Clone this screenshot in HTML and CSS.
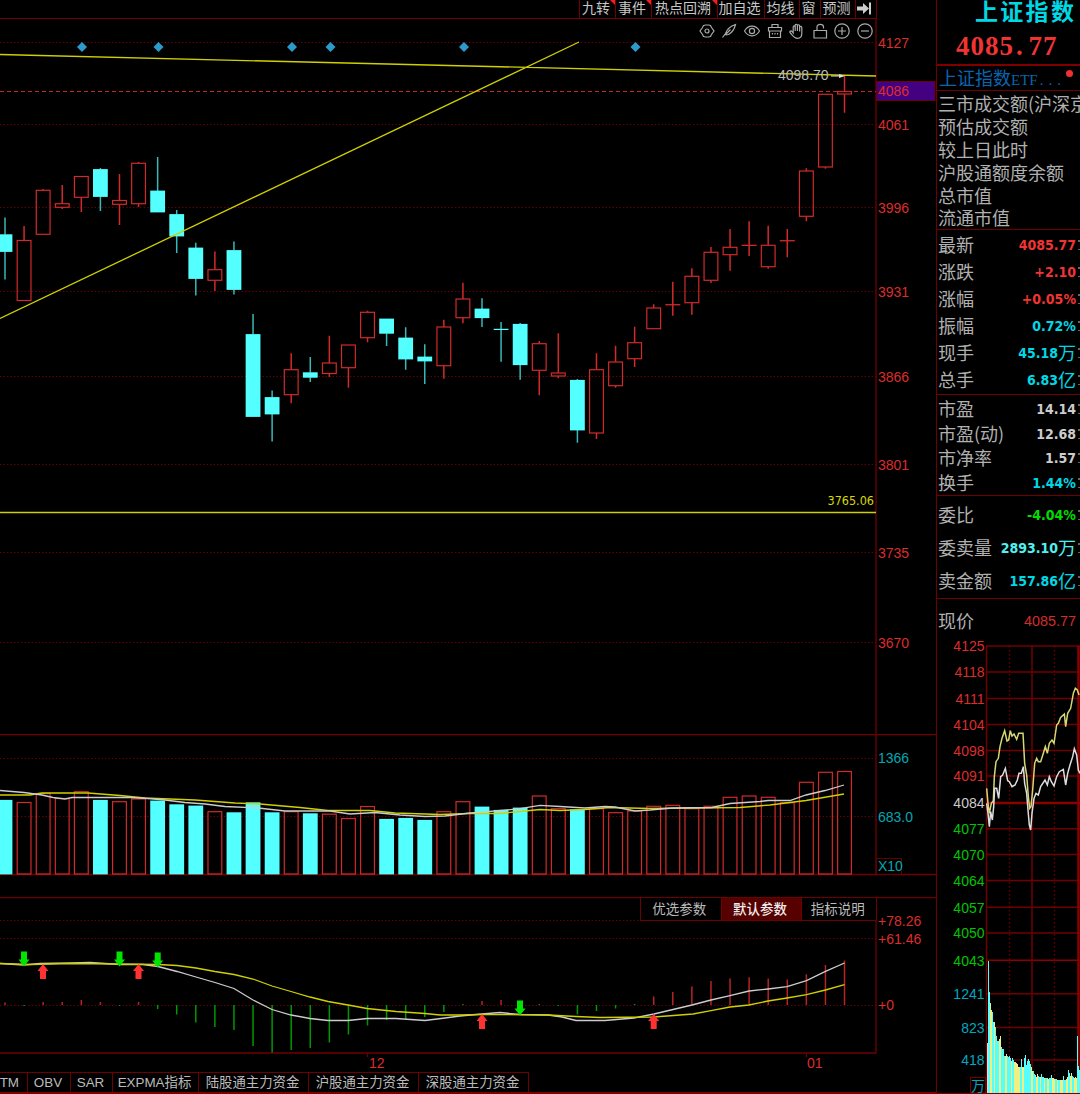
FILE: index.html
```html
<!DOCTYPE html>
<html lang="zh-CN">
<head>
  <meta charset="UTF-8">
  <meta name="viewport" content="width=device-width, initial-scale=1.0">
  <title>上证指数</title>
  <link rel="stylesheet" href="styles.css">
</head>
<body>
  <div class="app">
    <main class="charts">
      <nav class="toolbar">
        <span class="tool w-36 hot">九转</span>
        <span class="tool w-36 hot">事件</span>
        <span class="tool w-66 hot">热点回溯</span>
        <span class="tool w-47">加自选</span>
        <span class="tool w-35">均线</span>
        <span class="tool w-21">窗</span>
        <span class="tool w-35">预测</span>
        <span class="tool w-21"><svg width="15" height="13" viewBox="0 0 15 13"><path d="M0 4.500h6V1l6 5.500L6 12V8.500H0z" fill="#ccc"/><path d="M13 0.500v12" stroke="#ccc" stroke-width="2"/></svg></span>
      </nav>

      <section class="kline">
        <div class="draw-tools">
          <svg viewBox="0 0 16 16"><path d="M4.500 2.500L6.500 2h3l2 .5 1 2L15 8l-2.500 3.500-1 2-2 .5h-3l-2-.5-1-2L1 8l2.500-3.500z"/><circle cx="8" cy="8" r="2"/></svg>
          <svg viewBox="0 0 16 16"><path d="M1.500 14.500L4.500 10.500C6 6 10 3 14.500 1.500 13.500 5.500 11.500 9.500 7.500 11.500L4.500 12M4.500 11.500L9.500 6.500"/></svg>
          <svg viewBox="0 0 16 16"><path d="M0.500 8C4 1.500 12 1.500 15.500 8 12 14.500 4 14.500 0.500 8z"/><circle cx="8" cy="8" r="2.600"/></svg>
          <svg viewBox="0 0 16 16"><path d="M1.500 4.500h13v3.500H1.500zM2.500 8V14.500h11V8M5 4.500V1.500h6v3M5.500 10v1.500M8 10v1.500M10.500 10v1.500"/></svg>
          <svg viewBox="0 0 16 16"><path d="M4.200 10V4c0-1.400 2-1.400 2 0v4V2.300c0-1.400 2.200-1.400 2.200 0V8 2.800c0-1.400 2.200-1.400 2.200 0V8.500 4.500c0-1.400 2.200-1.400 2.200 0v6c0 3-1.800 4.800-4.500 4.800-3.200 0-4.300-2.300-7.300-5.800-.5-1.400 1-2 2-1z"/></svg>
          <svg viewBox="0 0 16 16"><path d="M2 7.500h12.500V15H2zM5 7.500V4c0-3.500 6.500-3.500 6.500 0v1.500"/></svg>
          <svg viewBox="0 0 16 16"><circle cx="8" cy="8" r="7.200"/><path d="M4 8h8M8 4v8"/></svg>
          <svg viewBox="0 0 16 16"><circle cx="8" cy="8" r="7.200"/><path d="M4 8h8"/></svg>
        </div>
        <svg class="panel" width="936" height="715" viewBox="0 19 936 715">
          <path class="grid" d="M0 42.500H876M0 124.500H876M0 207.500H876M0 291.500H876M0 376.500H876M0 464.500H876M0 552.500H876M0 642.500H876"/>
          <path class="frame" d="M876 19V734"/>
          <g id="diamonds"></g>
          <g id="candles"></g>
          <path class="latest" d="M0 91.500H876"/>
          <path class="ma-y" d="M0 54.500L876 76M0 318.500L579 42M0 512.500H876"/>
          <path d="M831 76h8" stroke="#ddd"/><path d="M839 74l6 2-6 2z" fill="#ddd"/>
          <text x="778" y="80" fill="#bbb">4098.70</text>
          <text x="827.500" y="505" class="small" fill="#d8d800">3765.06</text>
          <rect x="876.500" y="81.500" width="58.500" height="19" fill="#430080" stroke="#700000"/>
          <g class="red">
            <text x="878" y="47.500">4127</text><text x="878" y="95.500">4086</text>
            <text x="878" y="129.500">4061</text><text x="878" y="212.500">3996</text>
            <text x="878" y="296.500">3931</text><text x="878" y="381.500">3866</text>
            <text x="878" y="469.500">3801</text><text x="878" y="557.500">3735</text>
            <text x="878" y="647.500">3670</text>
          </g>
        </svg>
      </section>

      <section class="volume">
        <svg class="panel" width="936" height="163" viewBox="0 734 936 163">
          <path class="grid" d="M0 758.500H876M0 816.500H876"/>
          <path class="frame" d="M0 734.500H936M876 734V874.500M0 874.500H936"/>
          <g id="volumes"></g>
          <polyline class="ma-y" points="0,795 30,795 42,793 88,793 120,795.500 145,798 195,800 235,803 260,804 300,807.500 328,810.500 370,810.500 395,813 440,814.500 470,813.500 500,813.500 520,811.500 540,809.500 560,810.500 585,809.500 610,807.500 650,808.500 740,807.500 770,805 806,800.500 844,794"/>
          <polyline class="ma-w" points="0,790.500 24,792.500 42,795 53,797.500 65,799 72,797.500 130,797.500 148,798.500 165,800 185,802.500 205,804 225,806.500 258,808 285,811 330,811 350,814 375,812.500 400,815 425,816.500 445,816 470,813 482,812.200 500,810.500 520,808.700 540,805.300 560,806.500 585,808 605,806.500 615,807 635,811 650,810 672,808 712,807.500 730,803.500 760,801.500 768,800.500 790,800.500 806,795 825,790.500 844,785"/>
          <rect x="876.500" y="858.500" width="25" height="16" fill="none" stroke="#600000"/>
          <g class="teal">
            <text x="878" y="763">1366</text><text x="878" y="821.500">683.0</text><text x="878" y="871">X10</text>
          </g>
        </svg>
      </section>

      <section class="macd">
        <div class="param-tabs"><span>优选参数</span><span class="active">默认参数</span><span class="last-tab">指标说明</span></div>
        <svg class="panel" width="936" height="175" viewBox="0 897 936 175">
          <path class="grid" d="M0 920.500H876M0 938.500H876M0 1005.500H876"/>
          <path class="frame" d="M0 897.500H936M876 897V1053.500M0 1053H876M367.500 1053v4M806.500 1053v4"/>
          <g id="macd"></g>
          <polyline class="ma-w" points="0,963.500 24,965 40,963.500 72,963 90,962.500 120,964.500 143,964.500 158,966.500 177,971.500 196,977 215,982.500 234,988.500 253,1000 272,1009.500 291,1015 310,1018.500 328,1020.500 348,1020.500 367,1018.500 396,1018.500 425,1020.500 445,1018 460,1016 482,1014 500,1012.500 520,1014.500 548,1015 562,1017 576,1020.500 605,1020.500 634,1018 654,1014 692,1005 711,1000 730,995.700 749,991 768,989 787,986.700 806.500,980.700 825.500,971.300 844.500,963"/>
          <polyline class="ma-y" points="0,963.500 30,964.500 72,963.500 158,964.500 177,965.500 196,968 215,971.500 234,974.500 253,979 272,986 291,991.500 310,997 328,1001.500 348,1005 367,1008.500 396,1011.500 425,1013.500 440,1015 460,1015 482,1014.500 548,1015 576,1016.500 600,1017.500 654,1017 693,1014 711,1010.700 730,1007 749,1005 768,1001 787,998 806.500,994.700 825.500,990 844.500,984.700"/>
          <g id="signals"></g>
          <g class="red">
            <text x="878" y="926">+78.26</text><text x="878" y="944">+61.46</text><text x="878" y="1010">+0</text>
            <text x="369" y="1067.500">12</text><text x="807" y="1067.500">01</text>
          </g>
        </svg>
      </section>

      <nav class="indicators">
        <span class="w-28 cut">MTM</span><span class="w-43">OBV</span><span class="w-42">SAR</span><span class="w-86">EXPMA指标</span><span class="w-110">陆股通主力资金</span><span class="w-110">沪股通主力资金</span><span class="w-110">深股通主力资金</span>
      </nav>
    </main>

    <aside class="quote">
      <header>
        <h1>上证指数</h1>
        <div class="price">4085<i>.</i>77</div>
      </header>
      <div class="etf">上证指数<span>ETF</span><i>...</i><b></b></div>
      <ul class="totals">
        <li>三市成交额(沪深京</li>
        <li>预估成交额</li>
        <li>较上日此时</li>
        <li>沪股通额度余额</li>
        <li>总市值</li>
        <li>流通市值</li>
      </ul>
      <dl class="rows basic">
        <div><dt>最新</dt><dd class="up">4085.77</dd></div>
        <div><dt>涨跌</dt><dd class="up">+2.10</dd></div>
        <div><dt>涨幅</dt><dd class="up">+0.05%</dd></div>
        <div><dt>振幅</dt><dd class="cyan">0.72%</dd></div>
        <div><dt>现手</dt><dd class="cyan">45.18<em>万</em></dd></div>
        <div><dt>总手</dt><dd class="cyan">6.83<em>亿</em></dd></div>
      </dl>
      <dl class="rows ratio">
        <div><dt>市盈</dt><dd>14.14</dd></div>
        <div><dt>市盈(动)</dt><dd>12.68</dd></div>
        <div><dt>市净率</dt><dd>1.57</dd></div>
        <div><dt>换手</dt><dd class="cyan">1.44%</dd></div>
      </dl>
      <dl class="rows order">
        <div><dt>委比</dt><dd class="down">-4.04%</dd></div>
        <div><dt>委卖量</dt><dd class="light">2893.10<em>万</em></dd></div>
        <div><dt>卖金额</dt><dd class="cyan">157.86<em>亿</em></dd></div>
      </dl>
      <dl class="rows now">
        <div><dt>现价</dt><dd>4085.77</dd></div>
      </dl>
      <svg class="panel intraday" width="143" height="454" viewBox="937 640 143 454">
        <path class="grid2" d="M1009.500 646V1093M1054.500 646V1093"/>
        <g id="intraday-grid"></g>
        <path class="frame2" d="M986.500 646V1093M1032 646V1093"/>
        <path class="thick" d="M1078.500 646V1093M986 803H1080"/>
        <g id="intraday-vol"></g>
        <polyline id="avg" fill="none" stroke="#d6d673" stroke-width="1.500"/>
        <polyline id="tick" fill="none" stroke="#ddd" stroke-width="1.500"/>
        <rect x="970.500" y="1077.500" width="15" height="15.500" fill="none" stroke="#700000"/>
        <g id="intraday-labels" text-anchor="end"></g>
        <path d="M937 1093.500H1080" stroke="#800000"/>
      </svg>
    </aside>
  </div>
  <script src="charts.js"></script>
</body>
</html>
```
FILE: styles.css
```css
* { box-sizing: border-box; }
body { margin: 0; background: #000; color: #bbb; font-family: "Liberation Sans", "Noto Sans CJK SC", sans-serif; overflow: hidden; }
.app { display: grid; grid-template-columns: 936px 144px; width: 1080px; height: 1094px; overflow: hidden; }
.charts { display: flex; flex-direction: column; min-width: 0; }

.w-21 { width: 21px; }
.w-28 { width: 28px; }
.w-35 { width: 35px; }
.w-36 { width: 36px; }
.w-42 { width: 42px; }
.w-43 { width: 43px; }
.w-47 { width: 47px; }
.w-66 { width: 66px; }
.w-86 { width: 86px; }
.w-110 { width: 110px; }

/* top toolbar */
.toolbar { display: flex; justify-content: flex-end; width: 877px; height: 19px; border-bottom: 1px solid #700000; border-right: 1px solid #700000; }
.tool { position: relative; display: flex; flex: none; align-items: center; justify-content: center; height: 18px; padding: 0 3px 2px 0; border-left: 1px solid #700000; color: #c8c8c8; font-size: 14px; line-height: 16px; white-space: nowrap; }
.hot::after { content: ""; position: absolute; top: 0; right: 0; border-top: 5px solid #f02020; border-left: 5px solid transparent; }

/* chart panels */
.panel { display: block; font: 14px "Liberation Sans", sans-serif; }
.small { font: 12.5px "DejaVu Sans Condensed", "DejaVu Sans", sans-serif; font-stretch: condensed; }
.red { fill: #dc2c2c; }
.teal { fill: #00a8b0; }
.grid { fill: none; stroke: #640000; stroke-dasharray: 1.5 2; }
.frame { fill: none; stroke: #700000; stroke-width: 1.3; }
.latest { stroke: #c42828; stroke-dasharray: 4 3; stroke-width: 1.2; }
.ma-y { fill: none; stroke: #d0d000; stroke-width: 1.3; }
.ma-w { fill: none; stroke: #ccc; stroke-width: 1.3; }
.kline, .macd { position: relative; }
.draw-tools { position: absolute; top: 4px; right: 63px; display: flex; gap: 6.6px; }
.draw-tools svg { width: 16px; height: 16px; fill: none; stroke: #aaa; stroke-width: 1.2; }

.param-tabs { position: absolute; top: 0; left: 640px; display: flex; width: 237px; height: 24px; border: 1px solid #700000; background: #000; font-size: 13.5px; line-height: 23px; text-align: center; }
.param-tabs span { width: 81px; padding-right: 3px; border-right: 1px solid #700000; }
.param-tabs .active { background: #560000; color: #eee; font-weight: 500; }
.param-tabs .last-tab { width: 74px; border-right: 0; }

.indicators { display: flex; height: 22px; border-bottom: 2px solid #800000; font-size: 13.4px; line-height: 20px; text-align: center; }
.indicators span { flex: none; padding-right: 2px; border-top: 1px solid #700000; border-right: 1px solid #700000; white-space: nowrap; }
.indicators .cut { display: flex; justify-content: flex-end; padding-right: 8px; overflow: hidden; }

/* quote sidebar */
.quote { display: flex; flex-direction: column; min-width: 0; border-left: 1px solid #700000; font-family: "Noto Sans CJK SC", sans-serif; overflow: hidden; }
header { height: 66px; border-bottom: 2px solid #800000; }
h1 { margin: 0 0 0 38px; color: #00d8e4; font-size: 23px; font-weight: 700; line-height: 20px; letter-spacing: 2.3px; white-space: nowrap; }
.price { margin: 10px 0 0 19px; color: #f03434; font: bold 27px/32px "Liberation Serif", serif; letter-spacing: 1px; }
.price i { display: inline-block; width: 14.5px; padding-left: 2px; font-style: normal; }
.etf { position: relative; height: 25px; padding-left: 2px; border-bottom: 1px solid #700000; color: #0866b0; font-size: 18px; line-height: 22px; white-space: nowrap; }
.etf span { font: 15px/22px "Liberation Serif", serif; }
.etf i { margin-left: 2px; font: 15px/22px "Liberation Serif", serif; letter-spacing: 5px; }
.etf b { position: absolute; top: 4px; right: 7px; width: 7px; height: 7px; border-radius: 50%; background: #f23030; }
ul, dl { margin: 0; padding: 0; list-style: none; border-bottom: 1px solid #700000; font-size: 18px; color: #b0b0b0; }
.totals { height: 139px; padding: 1px 0 0 1px; }
.totals li { height: 22.9px; line-height: 22px; white-space: nowrap; }
.rows { display: flex; flex-direction: column; padding: 0 4px 0 1px; }
.rows div { display: flex; align-items: center; justify-content: space-between; position: relative; flex: 1; line-height: 22px; white-space: nowrap; }
.rows div::after { content: ""; position: absolute; right: -4px; width: 2px; height: 7px; border-top: 2px solid #666; border-bottom: 1px solid #666; }
.rows dt { margin-top: -2px; }
.rows dd { display: flex; align-items: center; margin: 0; color: #ccc; font-family: "DejaVu Sans Condensed", "DejaVu Sans", sans-serif; font-size: 14px; font-stretch: condensed; font-weight: 700; }
.rows em { margin-top: -2px; font: 18px/22px "Noto Sans CJK SC", sans-serif; }
.basic { height: 165px; padding-top: 1px; }
.ratio { height: 101px; padding-top: 2px; }
.order { height: 103px; padding-top: 2px; }
.rows.now { height: 41px; padding-top: 2px; border: 0; }
.now div::after { display: none; }
.rows .up { color: #f03434; }
.rows .down { color: #00dc00; }
.rows .cyan { color: #00d8e4; }
.rows .light { color: #50f0f0; }
.rows.now dd { color: #d42c2c; font: 14.4px "Liberation Sans", sans-serif; }
.intraday { flex: none; }
.grid2 { stroke: #780000; stroke-dasharray: 1.5 2.5; stroke-width: 1.2; }
.frame2 { fill: none; stroke: #700000; stroke-width: 1.5; }
.thick { fill: none; stroke: #8c0000; stroke-width: 2.5; }
```
FILE: charts.js
```javascript
const NS = 'http://www.w3.org/2000/svg';
const UP = '#d02a2a';
const DOWN = '#54ffff';
const STEP = 19.08;

function add(id, tag, attrs, text) {
  const el = document.createElementNS(NS, tag);
  for (const k in attrs) el.setAttribute(k, attrs[k]);
  if (text) el.textContent = text;
  document.getElementById(id).appendChild(el);
}
const xAt = i => 5 + i * STEP;

// [high, body top, body bottom, low, down day]
const candles = [
  [217.5, 234.7, 251.5, 279.5, 1], [226, 240.5, 300.5, 300.5], [189, 190.3, 234.3, 234.3],
  [185, 203.7, 207.3, 209], [176.5, 176.5, 197.3, 212], [168, 169.5, 196.5, 211, 1],
  [174, 200.5, 204.3, 225], [162, 163.3, 203.7, 207], [157, 191, 212, 212, 1],
  [210, 214.5, 236, 253, 1], [242.7, 248, 278.5, 295.5, 1], [251.5, 269.7, 280.3, 291],
  [241.5, 250.5, 289.5, 294.5, 1], [314, 334.5, 416.5, 416.5, 1], [390.5, 397.5, 414, 441.5, 1],
  [353.3, 369.7, 394.7, 403.3], [357, 372.7, 377.3, 382, 1], [335.7, 363, 373.5, 377],
  [345, 345, 367.7, 387.7], [310.7, 312.3, 337.7, 342.3], [319, 319, 333.3, 346, 1],
  [327.3, 338, 359, 369.7, 1], [344.3, 357, 361, 384, 1], [319.7, 327, 365.7, 378.7],
  [282.7, 299, 317.7, 323.3], [298.3, 309, 317.7, 327, 1], [322, 329.2, 329.6, 361.7, 1],
  [323, 324.3, 364.7, 379.7, 1], [341, 343.7, 370.3, 395.3], [333.3, 373, 376, 378.3],
  [379, 380.3, 430, 442.7, 1], [353.3, 369.7, 433, 439], [345.7, 362, 385.7, 387.7],
  [326.7, 342.7, 358.7, 367], [304.3, 308, 328.7, 328.7], [281.7, 304.7, 304.7, 315.7],
  [268.3, 276.3, 302.7, 314.7], [247, 252.3, 280.3, 283], [229, 247.3, 254.7, 270.7],
  [221.3, 245.3, 245.3, 256], [225.7, 245.3, 266.7, 268.7], [229, 240.7, 240.7, 257.3],
  [168.3, 171, 216.3, 221.3], [94.3, 94.3, 167, 168.7], [75.3, 91.5, 94, 112.7]
];
const volumes = [
  800.3, 802.5, 793.5, 798.5, 791.7, 800.3, 801.7, 799, 801, 804.7, 806, 811.7, 812.7, 802.7, 812.7,
  811.7, 813.7, 814.2, 818.5, 806.5, 819.3, 818.3, 820.3, 811.7, 801.7, 807, 810.3, 808, 796, 808.7,
  809.7, 808.7, 812.7, 811, 806.3, 805.3, 808.7, 806.3, 797.3, 796, 797.3, 802.7, 782.3, 772.3, 771.5
];
candles.forEach(([high, top, bottom, low, down], i) => {
  const x = xAt(i);
  const wick = down ? '#38b8b8' : UP;
  add('candles', 'path', { d: `M${x} ${high}V${top}M${x} ${bottom}V${low}`, stroke: wick, 'stroke-width': 1.5 });
  const box = (id, y, h) => down
    ? add(id, 'rect', { x: x - 7.4, y: y - .4, width: 14.8, height: h + .8, fill: DOWN })
    : add(id, 'rect', { x: x - 6.9, y, width: 13.8, height: h || .1, fill: 'none', stroke: UP, 'stroke-width': 1.2 });
  box('candles', top, bottom - top);
  // volume bars share the candle colour
  box('volumes', volumes[i], 874 - volumes[i]);
});

[82, 158.5, 292, 330.5, 464, 635.5].forEach(x => {
  add('diamonds', 'path', { d: `M${x} 42l5 5-5 5-5-5z`, fill: '#2a9ccc' });
});

const macd = [
  1002.5, 1006, 1002, 1002, 1000, 1002, 1006, 1002, 1009, 1014.5, 1022.5, 1027, 1030, 1046, 1052.5,
  1050, 1048, 1042.5, 1034.5, 1025.5, 1020, 1019, 1017, 1012, 1004, 1001, 1000, 1006, 1004, 1006,
  1014.5, 1011, 1008.5, 1004, 996.5, 992, 986.5, 981, 978.5, 977.3, 978.5, 979.5, 974.3, 965, 960.5
];
const fading = [24, 28, 33];
macd.forEach((y, i) => {
  const green = y > 1005 || fading.includes(i);
  add('macd', 'path', { d: `M${xAt(i)} 1005V${y}`, stroke: green ? '#009800' : '#b82424', 'stroke-width': 1.5 });
});

const arrow = (x, y, dir, fill) => add('signals', 'path', {
  d: `M${x} ${y}l5.5 ${-7 * dir}h-2.500v${-8 * dir}h-6v${8 * dir}h-2.500z`, fill
});
[[24, 966.5], [119.5, 966.5], [157.7, 967.5], [520, 1015.5]].forEach(([x, y]) => arrow(x, y, 1, '#00e400'));
[[43, 964], [138.5, 964], [482, 1014], [653.7, 1014]].forEach(([x, y]) => arrow(x, y, -1, '#ff3232'));

// intraday chart
const levels = [
  [4125, 646, 'r'], [4118, 672, 'r'], [4111, 698.5, 'r'], [4104, 724.5, 'r'], [4098, 750.5, 'r'],
  [4091, 776, 'r'], [4084, 803, 'w'], [4077, 828.7, 'g'], [4070, 854.5, 'g'], [4064, 880.5, 'g'],
  [4057, 907.3, 'g'], [4050, 933, 'g'], [4043, 960.3, 'g'], [1241, 993.8, 'c'], [823, 1027.5, 'c'], [418, 1060, 'c']
];
const tone = { r: '#dc2c2c', w: '#ccc', g: '#00c400', c: '#00a8c0' };
levels.forEach(([value, y, c]) => {
  add('intraday-grid', 'path', { d: `M986 ${y}H1080`, stroke: value === 4043 ? '#8c0000' : '#700000', 'stroke-width': 1.4 });
  add('intraday-labels', 'text', { x: 984.5, y: y + 5.2, fill: tone[c] }, String(value));
});
add('intraday-labels', 'text', { x: 985, y: 1090.5, fill: tone.c, 'font-family': 'Noto Sans CJK SC' }, '万');

const bars = [
  1043, 961, 992, 1003, 1010, 1012, 1022, 1022, 1027, 1036, 1041, 1041, 1039, 1036, 1047, 1049, 1049,
  1056, 1056, 1054, 1056, 1057, 1056, 1058, 1061, 1058, 1060, 1062, 1062, 1063, 1064, 1067, 1067, 1067,
  1059, 1067, 1067, 1058, 1055, 1065, 1061, 1059, 1061, 1064, 1067, 1071, 1071, 1074, 1075, 1077, 1074,
  1076, 1077, 1077, 1074, 1077, 1077, 1078, 1078, 1078, 1078, 1079, 1078, 1078, 1075, 1078, 1078, 1079,
  1079, 1079, 1080, 1080, 1080, 1080, 1080, 1080, 1076, 1080, 1080, 1079, 1077, 1070, 1073, 1076, 1073,
  1076, 1077, 1078, 1077, 1078, 1036, 1066, 1070
];
const mix = 'wccyyccyccccyyccccyyccccyccyyyyyyccyycccccccyycccyyccycccyccyycccyyyccyccyyycccyyccyyccyyyccc';
bars.forEach((y, i) => {
  const fill = { w: '#ddd', c: '#54ffff', y: '#f0f080' }[mix[i] || 'c'];
  add('intraday-vol', 'rect', { x: 987 + i, y, width: 1, height: 1093 - y, fill });
});

// samples are stored at three units per pixel
const trace = (id, s) => document.getElementById(id).setAttribute('points',
  s.split(' ').map(p => p.split(',').map(Number)).map(([x, y]) => `${930 + x / 3},${630 + y / 3}`).join(' '));
trace('avg', '170,475 174,520 178,550 184,520 190,512 193,440 198,395 205,385 210,350 216,325 224,302 231,333 236,330 241,302 246,318 252,312 260,328 266,310 274,310 279,310 284,400 290,435 295,500 299,535 303,530 308,480 314,400 320,385 325,395 332,395 340,370 346,350 352,370 358,340 366,330 372,340 380,285 385,280 392,262 403,252 407,290 413,250 422,235 430,190 436,175 442,180 447,195');
trace('tick', '170,520 174,550 178,590 182,545 187,570 191,530 194,475 200,475 206,505 212,440 218,435 226,415 233,452 238,455 246,470 255,465 262,450 267,430 274,430 280,410 284,460 290,490 294,540 298,585 302,600 306,550 312,505 318,490 325,495 332,470 345,450 352,465 358,440 364,455 372,468 380,440 388,425 400,418 407,465 413,430 420,405 428,380 433,356 440,375 445,420 450,430');
```
